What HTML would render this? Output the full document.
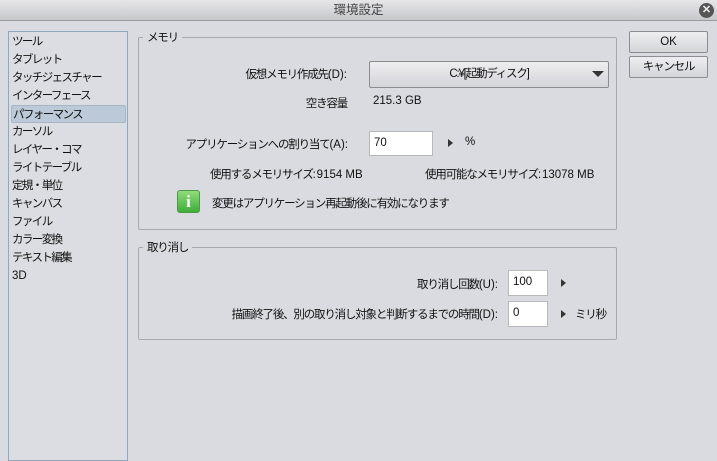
<!DOCTYPE html>
<html><head><meta charset="utf-8"><style>
*{margin:0;padding:0;box-sizing:border-box}
body{width:717px;height:457px;background:#dadbe0;font-family:"Liberation Sans","Noto Sans CJK JP",sans-serif;font-size:11.5px;letter-spacing:-1.2px;color:#111;position:relative;overflow:hidden}
.n{letter-spacing:0}
.a{position:absolute;white-space:nowrap}
.r{position:absolute;white-space:nowrap;text-align:right}
#title{left:0;top:0;width:717px;height:21px;background:linear-gradient(#e6e6e8,#c7c8cc);border-bottom:1px solid #9a9ba0;text-align:center;line-height:21px;color:#444;font-size:12.5px;letter-spacing:0}
#close{right:3px;top:3px;width:15px;height:15px;border-radius:50%;background:#555;color:#eee;font-size:11px;line-height:15px;text-align:center;font-weight:bold;letter-spacing:0}
#list{left:8px;top:31px;width:120px;height:430px;border:1px solid #8fa8bf;background:#dcdde2;letter-spacing:-1.6px}
.it{position:absolute;left:2px;height:18px;line-height:18px;width:115px;padding-left:1px}
.sel{background:#bcc9d8;border:1px solid #a7b6c7;border-radius:2px}
.grp{border:1px solid #a8a9ad;border-radius:2px}
.gt{background:#dadbe0;padding:0 4px}
.btn{border:1px solid #8c8d92;background:linear-gradient(#eeeef0,#d4d5d9);border-radius:2px;text-align:center}
.in{background:#fff;border:1px solid #b8b9bd;padding-left:4px;line-height:22px;letter-spacing:0}
.tri{width:0;height:0;border-left:5px solid #333;border-top:4px solid transparent;border-bottom:4px solid transparent}
</style></head><body>
<div class="a" id="title">環境設定</div>
<div class="a" id="close">✕</div>
<div class="a" id="list">
<div class="it" style="top:1px">ツール</div>
<div class="it" style="top:19px">タブレット</div>
<div class="it" style="top:37px">タッチジェスチャー</div>
<div class="it" style="top:55px">インターフェース</div>
<div class="it sel" style="top:73px">パフォーマンス</div>
<div class="it" style="top:91px">カーソル</div>
<div class="it" style="top:109px">レイヤー・コマ</div>
<div class="it" style="top:127px">ライトテーブル</div>
<div class="it" style="top:145px">定規・単位</div>
<div class="it" style="top:163px">キャンバス</div>
<div class="it" style="top:181px">ファイル</div>
<div class="it" style="top:199px">カラー変換</div>
<div class="it" style="top:217px">テキスト編集</div>
<div class="it" style="top:235px"><span class="n">3D</span></div>
</div>
<div class="a grp" style="left:138px;top:37px;width:479px;height:193px"></div>
<div class="a gt" style="left:143px;top:29px">メモリ</div>
<div class="r" style="right:370px;top:66px">仮想メモリ作成先<span class="n">(D):</span></div>
<div class="a btn" style="left:369px;top:61px;width:240px;height:27px;line-height:25px">C:¥[起動ディスク]</div>
<div class="a" style="left:592px;top:71px;border-top:6px solid #333;border-left:6px solid transparent;border-right:6px solid transparent"></div>
<div class="r" style="right:370px;top:95px">空き容量</div>
<div class="a n" style="left:373px;top:95px">215.3 GB</div>
<div class="r" style="right:369px;top:136px">アプリケーションへの割り当て<span class="n">(A):</span></div>
<div class="a in" style="left:369px;top:131px;width:64px;height:25px">70</div>
<div class="a tri" style="left:448px;top:139px"></div>
<div class="a" style="left:465px;top:136px">%</div>
<div class="a" style="left:210px;top:166px">使用するメモリサイズ: <span class="n">9154 MB</span></div>
<div class="a" style="left:425px;top:166px">使用可能なメモリサイズ: <span class="n">13078 MB</span></div>
<div class="a" style="left:177px;top:190px;width:23px;height:23px;border-radius:3px;background:linear-gradient(#8fdc7a,#3fae3a);border:1px solid #4c9a45;color:#fff;font-weight:bold;font-size:17px;text-align:center;line-height:21px;font-family:'Liberation Serif',serif;letter-spacing:0">i</div>
<div class="a" style="left:212px;top:195px">変更はアプリケーション再起動後に有効になります</div>
<div class="a grp" style="left:138px;top:247px;width:479px;height:93px"></div>
<div class="a gt" style="left:143px;top:239px">取り消し</div>
<div class="r" style="right:219px;top:276px">取り消し回数<span class="n">(U):</span></div>
<div class="a in" style="left:508px;top:270px;width:40px;height:26px">100</div>
<div class="a tri" style="left:561px;top:279px"></div>
<div class="r" style="right:219px;top:306px">描画終了後、別の取り消し対象と判断するまでの時間<span class="n">(D):</span></div>
<div class="a in" style="left:508px;top:301px;width:40px;height:26px">0</div>
<div class="a tri" style="left:561px;top:310px"></div>
<div class="a" style="left:575px;top:306px">ミリ秒</div>
<div class="a btn" style="left:629px;top:31px;width:79px;height:22px;line-height:20px;letter-spacing:0">OK</div>
<div class="a btn" style="left:629px;top:56px;width:79px;height:22px;line-height:20px">キャンセル</div>
</body></html>
